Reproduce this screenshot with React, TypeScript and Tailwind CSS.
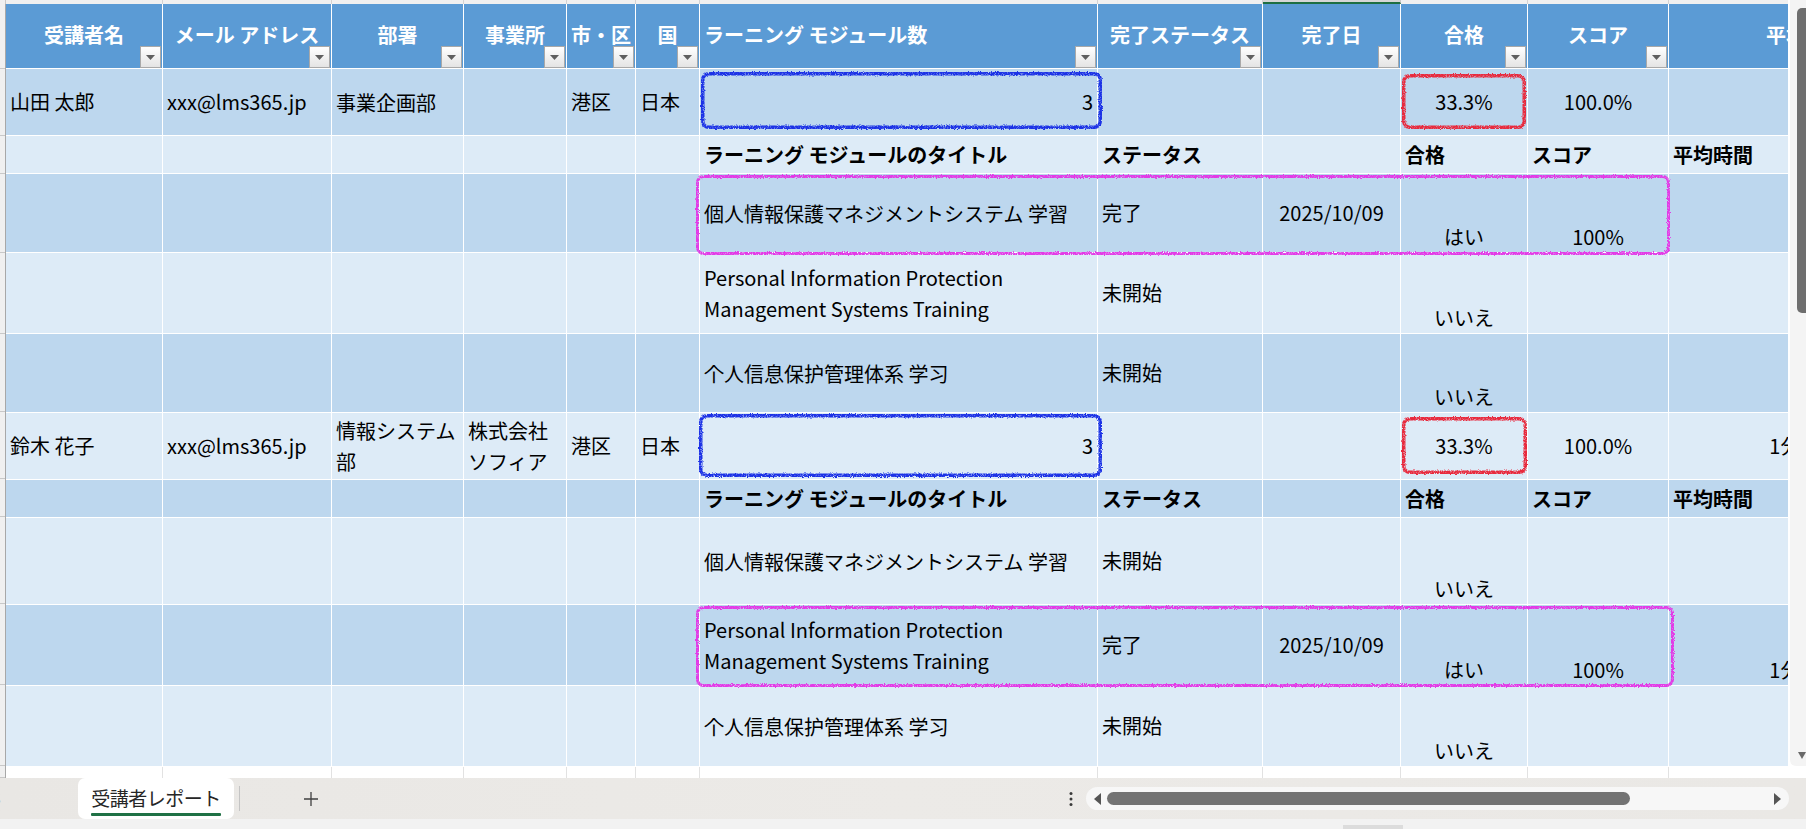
import React from "react";

const DARK = "bg-[#bdd7ee]";
const LIGHT = "bg-[#ddebf7]";

type Align = "l" | "c" | "r";

function DropBtn() {
  return (
    <div className="absolute right-[1px] bottom-0 w-[21px] h-[22px] border border-[#a9a9a9] bg-gradient-to-b from-[#ffffff] to-[#e4e4e4] flex items-center justify-center">
      <svg width="9" height="5" viewBox="0 0 9 5">
        <path d="M0 0 L9 0 L4.5 5 Z" fill="#5f5f5f" />
      </svg>
    </div>
  );
}

function HeaderCell({ label, align, dd }: { label: string; align: Align; dd: boolean }) {
  const justify = align === "l" ? "justify-start pl-[4px]" : "justify-center";
  return (
    <div className={`relative bg-[#5b9bd5] flex items-center ${justify} overflow-hidden whitespace-nowrap text-white font-bold text-[20px] leading-[24px] pb-[2px]`}>
      <span>{label}</span>
      {dd && <DropBtn />}
    </div>
  );
}

function Cell({
  bg,
  text,
  align = "l",
  v = "c",
  bold = false,
  wrap = false,
}: {
  bg: string;
  text?: React.ReactNode;
  align?: Align;
  v?: "c" | "b";
  bold?: boolean;
  wrap?: boolean;
}) {
  const h = align === "l" ? "justify-start text-left" : align === "c" ? "justify-center text-center" : "justify-end text-right";
  const vv = v === "c" ? "items-center" : "items-end pb-[2px]";
  const b = bold ? "font-bold" : "font-normal";
  const w = wrap ? "whitespace-normal leading-[31px]" : "whitespace-nowrap leading-[26px]";
  return (
    <div className={`${bg} flex ${h} ${vv} ${b} ${w} px-[4px] overflow-hidden text-[20px] text-black`}>
      {text ? <span>{text}</span> : null}
    </div>
  );
}

const headers: { label: string; align: Align; dd: boolean }[] = [
  { label: "受講者名", align: "c", dd: true },
  { label: "メール アドレス", align: "c", dd: true },
  { label: "部署", align: "c", dd: true },
  { label: "事業所", align: "c", dd: true },
  { label: "市・区", align: "l", dd: true },
  { label: "国", align: "c", dd: true },
  { label: "ラーニング モジュール数", align: "l", dd: true },
  { label: "完了ステータス", align: "c", dd: true },
  { label: "完了日", align: "c", dd: true },
  { label: "合格", align: "c", dd: true },
  { label: "スコア", align: "c", dd: true },
  { label: "平均時間", align: "c", dd: false },
];

type Person = {
  name: string;
  email: string;
  dept: string;
  office: string;
  city: string;
  country: string;
  count: string;
  pass: string;
  score: string;
  avg: string;
};

type Mod = { title: React.ReactNode; status: string; date: string; pass: string; score: string; avg: string };

function GroupRow({ p, bg }: { p: Person; bg: string }) {
  return (
    <>
      <Cell bg={bg} text={p.name} />
      <Cell bg={bg} text={p.email} />
      <Cell bg={bg} text={p.dept} wrap />
      <Cell bg={bg} text={p.office} wrap />
      <Cell bg={bg} text={p.city} />
      <Cell bg={bg} text={p.country} />
      <Cell bg={bg} text={p.count} align="r" />
      <Cell bg={bg} />
      <Cell bg={bg} />
      <Cell bg={bg} text={p.pass} align="c" />
      <Cell bg={bg} text={p.score} align="c" />
      <Cell bg={bg} text={p.avg} align="c" />
    </>
  );
}

function SubHeaderRow({ bg }: { bg: string }) {
  return (
    <>
      <Cell bg={bg} />
      <Cell bg={bg} />
      <Cell bg={bg} />
      <Cell bg={bg} />
      <Cell bg={bg} />
      <Cell bg={bg} />
      <Cell bg={bg} text="ラーニング モジュールのタイトル" bold />
      <Cell bg={bg} text="ステータス" bold />
      <Cell bg={bg} />
      <Cell bg={bg} text="合格" bold />
      <Cell bg={bg} text="スコア" bold />
      <Cell bg={bg} text="平均時間" bold />
    </>
  );
}

function ModRow({ m, bg }: { m: Mod; bg: string }) {
  return (
    <>
      <Cell bg={bg} />
      <Cell bg={bg} />
      <Cell bg={bg} />
      <Cell bg={bg} />
      <Cell bg={bg} />
      <Cell bg={bg} />
      <Cell bg={bg} text={m.title} wrap />
      <Cell bg={bg} text={m.status} />
      <Cell bg={bg} text={m.date} align="c" />
      <Cell bg={bg} text={m.pass} align="c" v="b" />
      <Cell bg={bg} text={m.score} align="c" v="b" />
      <Cell bg={bg} text={m.avg} align="c" v="b" />
    </>
  );
}

const EN = (
  <>
    Personal Information Protection
    <br />
    Management Systems Training
  </>
);

const p1: Person = {
  name: "山田 太郎",
  email: "xxx@lms365.jp",
  dept: "事業企画部",
  office: "",
  city: "港区",
  country: "日本",
  count: "3",
  pass: "33.3%",
  score: "100.0%",
  avg: "",
};
const p2: Person = {
  name: "鈴木 花子",
  email: "xxx@lms365.jp",
  dept: "情報システム部",
  office: "株式会社ソフィア",
  city: "港区",
  country: "日本",
  count: "3",
  pass: "33.3%",
  score: "100.0%",
  avg: "1分12秒",
};

const mods1: Mod[] = [
  { title: "個人情報保護マネジメントシステム 学習", status: "完了", date: "2025/10/09", pass: "はい", score: "100%", avg: "" },
  { title: EN, status: "未開始", date: "", pass: "いいえ", score: "", avg: "" },
  { title: "个人信息保护管理体系 学习", status: "未開始", date: "", pass: "いいえ", score: "", avg: "" },
];
const mods2: Mod[] = [
  { title: "個人情報保護マネジメントシステム 学習", status: "未開始", date: "", pass: "いいえ", score: "", avg: "" },
  { title: EN, status: "完了", date: "2025/10/09", pass: "はい", score: "100%", avg: "1分12秒" },
  { title: "个人信息保护管理体系 学习", status: "未開始", date: "", pass: "いいえ", score: "", avg: "" },
];

const STRIP_W = [157, 169, 132, 103, 69, 64, 398, 165, 138, 127, 141, 275];

function HandBox({ x, y, w, h, color, sw }: { x: number; y: number; w: number; h: number; color: string; sw: number }) {
  return (
    <svg
      className="absolute pointer-events-none"
      style={{ left: x - 4, top: y - 4 }}
      width={w + 8}
      height={h + 8}
      viewBox={`0 0 ${w + 8} ${h + 8}`}
    >
      <rect
        x={4 + sw / 2}
        y={4 + sw / 2}
        width={w - sw}
        height={h - sw}
        rx={6}
        ry={6}
        fill="none"
        stroke={color}
        strokeWidth={sw}
        filter="url(#crayon)"
      />
    </svg>
  );
}

export default function App() {
  return (
    <div className="w-[1806px] h-[829px] overflow-hidden bg-white flex flex-col font-['Noto_Sans_CJK_JP','Noto_Sans',sans-serif]">
      <svg width="0" height="0" className="absolute">
        <defs>
          <filter id="crayon" x="-5%" y="-20%" width="110%" height="140%">
            <feTurbulence type="fractalNoise" baseFrequency="0.8" numOctaves="2" seed="3" result="n" />
            <feDisplacementMap in="SourceGraphic" in2="n" scale="3" xChannelSelector="R" yChannelSelector="G" result="d" />
            <feTurbulence type="fractalNoise" baseFrequency="1.4" numOctaves="1" seed="9" result="n2" />
            <feColorMatrix in="n2" type="matrix" values="0 0 0 0 0  0 0 0 0 0  0 0 0 0 0  0 0 0 -2.2 2.1" result="mask" />
            <feComposite in="d" in2="mask" operator="in" />
          </filter>
        </defs>
      </svg>
      {/* main area */}
      <div className="h-[778px] flex shrink-0">
        <div className="relative w-[1788px] h-full overflow-hidden flex flex-col">
          {/* column header strip */}
          <div className="h-[4px] flex shrink-0 w-max">
            <div className="w-[6px] bg-[#f0f0f0] border-r border-[#c8c8c8]" />
            {STRIP_W.map((w, i) =>
              i === 8 ? (
                <div key={i} className="h-[4px] bg-[#d6d6d6] border-r border-[#c8c8c8] border-b-[2px] border-b-[#1e6e42]" style={{ width: w }} />
              ) : (
                <div key={i} className="h-[4px] bg-[#f0f0f0] border-r border-[#d2d2d2]" style={{ width: w }} />
              )
            )}
          </div>
          <div className="flex flex-1 min-h-0">
            {/* row header gutter */}
            <div className="w-[6px] shrink-0 bg-[#f0f0f0] border-r border-[#a8a8a8] flex flex-col">
              {[64, 66, 37, 78, 80, 78, 66, 37, 86, 80, 80, 11].map((h, i) => (
                <div key={i} className="border-b border-[#c8c8c8]" style={{ height: h + 1 }} />
              ))}
            </div>
            <div className="flex flex-col w-max">
              <div className="grid w-max grid-cols-[156px_168px_131px_102px_68px_63px_397px_164px_137px_126px_140px_274px] grid-rows-[64px_66px_37px_78px_80px_78px_66px_37px_86px_80px_80px] gap-px bg-white border-b border-white">
                {headers.map((h, i) => (
                  <HeaderCell key={i} label={h.label} align={h.align} dd={h.dd} />
                ))}
                <GroupRow p={p1} bg={DARK} />
                <SubHeaderRow bg={LIGHT} />
                <ModRow m={mods1[0]} bg={DARK} />
                <ModRow m={mods1[1]} bg={LIGHT} />
                <ModRow m={mods1[2]} bg={DARK} />
                <GroupRow p={p2} bg={LIGHT} />
                <SubHeaderRow bg={DARK} />
                <ModRow m={mods2[0]} bg={LIGHT} />
                <ModRow m={mods2[1]} bg={DARK} />
                <ModRow m={mods2[2]} bg={LIGHT} />
              </div>
              <div className="flex h-[11px] w-max">
                {STRIP_W.map((w, i) => (
                  <div key={i} className="h-full border-r border-[#e2e2e2] bg-white" style={{ width: w }} />
                ))}
              </div>
            </div>
          </div>

          <HandBox x={701} y={72} w={401} h={57} color="#1c33e6" sw={3.5} />
          <HandBox x={1402} y={74} w={124} h={55} color="#e8293c" sw={3.5} />
          <HandBox x={696} y={175} w={974} h={80} color="#e23be6" sw={3} />
          <HandBox x={699} y={414} w={403} h={63} color="#1c33e6" sw={3.5} />
          <HandBox x={1402} y={417} w={125} h={57} color="#e8293c" sw={3.5} />
          <HandBox x={696} y={606} w={978} h={81} color="#e23be6" sw={3} />
        </div>
        {/* vertical scrollbar */}
        <div className="w-[18px] h-full bg-white pl-[2px] shrink-0">
          <div className="h-[766px] bg-[#f4f4f4] rounded-bl-[6px] relative flex flex-col items-end pt-[8px]">
            <div className="w-[9px] h-[305px] bg-[#6e6e6e] rounded-l-[5px]" />
            <div className="flex-1" />
            <svg width="8" height="7" viewBox="0 0 8 7" className="mb-[7px]">
              <path d="M0 0 L8 0 L4 7 Z" fill="#6a6a6a" />
            </svg>
          </div>
        </div>
      </div>

      {/* sheet tab bar */}
      <div className="h-[41px] shrink-0 flex items-stretch bg-gradient-to-r from-[#e9e7e4] via-[#eceae7] to-[#eae8e5]">
        <div className="w-[78px] flex items-center">
          <span className="text-[#a0a0a0] text-[16px] leading-none -ml-[4px]">›</span>
        </div>
        <div className="w-[156px] bg-white rounded-[7px] flex flex-col items-center pt-[8px]">
          <span className="text-[19px] leading-[24px] text-[#262626] tracking-[-0.5px]">受講者レポート</span>
          <div className="mt-[3px] w-[130px] h-[3px] bg-[#1f7145] rounded-[1px]" />
        </div>
        <div className="ml-[5px] w-px my-[8px] bg-[#c4c4c4]" />
        <div className="ml-[61px] w-[20px] flex items-center justify-center">
          <svg width="16" height="16" viewBox="0 0 16 16">
            <path d="M8 1 V15 M1 8 H15" stroke="#404040" strokeWidth="1.3" />
          </svg>
        </div>
        <div className="flex-1" />
        <div className="w-[20px] flex items-center justify-center mr-[5px]">
          <svg width="4" height="16" viewBox="0 0 4 16">
            <circle cx="2" cy="2.5" r="1.5" fill="#3a3a3a" />
            <circle cx="2" cy="8" r="1.5" fill="#3a3a3a" />
            <circle cx="2" cy="13.5" r="1.5" fill="#3a3a3a" />
          </svg>
        </div>
        <div className="w-[703px] my-[9px] bg-[#f7f7f7] rounded-full flex items-center px-[8px] mr-[17px]">
          <svg width="7" height="12" viewBox="0 0 7 12">
            <path d="M7 0 L7 12 L0 6 Z" fill="#555" />
          </svg>
          <div className="ml-[6px] w-[523px] h-[13px] bg-[#737373] rounded-full" />
          <div className="flex-1" />
          <svg width="7" height="12" viewBox="0 0 7 12">
            <path d="M0 0 L0 12 L7 6 Z" fill="#555" />
          </svg>
        </div>
      </div>
      <div className="h-[10px] shrink-0 bg-[#f2f2f2] flex">
        <div className="ml-[1343px] mt-[6px] w-[60px] h-[4px] bg-[#dcdcdc]" />
      </div>
    </div>
  );
}
